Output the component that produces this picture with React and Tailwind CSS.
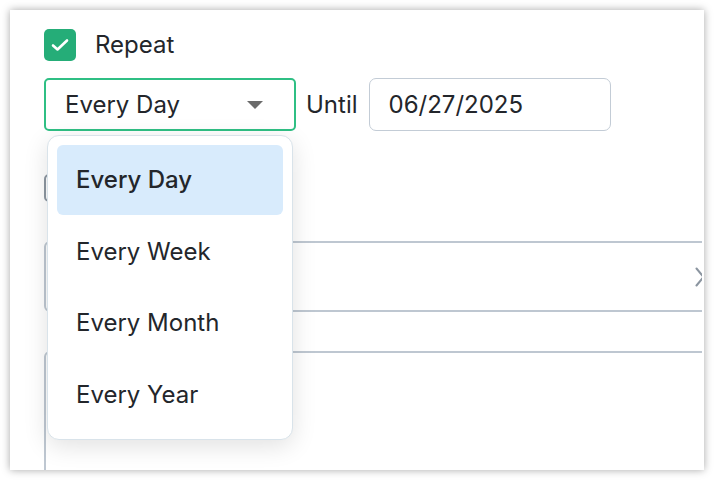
import React from 'react';

const options = ['Every Day', 'Every Week', 'Every Month', 'Every Year'];

const App = () => {
  return (
    <div className="w-[714px] h-[480px] bg-white p-[10px]" style={{ fontFamily: 'Inter, "Noto Sans", sans-serif' }}>
      <div className="relative w-[694px] h-[460px] bg-white shadow-[0_0_8px_rgba(0,0,0,0.35)]">
        {/* form body, clipped on the right */}
        <div className="w-[692px] h-[460px] overflow-hidden pl-[34px] pt-[19px] text-[#23262b]">
          <div className="flex items-center gap-[19px]">
            <div className="w-[32px] h-[32px] rounded-[5px] bg-[#25ad78] flex items-center justify-center">
              <svg width="18" height="14" viewBox="0 0 18 14" fill="none">
                <path d="M2 7.5 L6.5 11.5 L16 2.5" stroke="#fff" strokeWidth="2.6" strokeLinecap="round" strokeLinejoin="round" />
              </svg>
            </div>
            <span className="text-[24px] leading-none">Repeat</span>
          </div>

          <div className="mt-[17px] flex items-center">
            <div className="w-[252px] h-[53px] border-2 border-[#2fbf84] rounded-[5px] pl-[19px] pr-[31px] flex items-center justify-between">
              <span className="text-[24px]">Every Day</span>
              <svg width="16" height="8" viewBox="0 0 16 8">
                <path d="M0 0 L16 0 L8 8 Z" fill="#6b6b6b" />
              </svg>
            </div>
            <span className="ml-[10px] text-[24px]">Until</span>
            <div className="ml-[11px] w-[242px] h-[53px] border-[1.5px] border-[#c3ccd6] rounded-[7px] pl-[19px] flex items-center">
              <span className="text-[24px]">06/27/2025</span>
            </div>
          </div>

          <div className="mt-[43px] w-[28px] h-[28px] border-2 border-[#8d97a1] rounded-[5px]" />

          <div className="mt-[39px] w-[700px] h-[71px] border-2 border-[#bec7d1] rounded-[6px] flex items-center justify-end pr-[37px]">
            <svg width="10" height="20" viewBox="0 0 10 20" fill="none">
              <path d="M1.5 1.5 L8.5 10 L1.5 18.5" stroke="#8b95a0" strokeWidth="2" strokeLinecap="round" />
            </svg>
          </div>

          <div className="mt-[39px] w-[700px] h-[160px] border-2 border-[#bec7d1] rounded-[6px]" />
        </div>

        {/* open dropdown menu */}
        <div className="absolute left-[37px] top-[125px] w-[246px] h-[305px] bg-white border-[1.5px] border-[#d9e3ea] rounded-[12px] shadow-[0_6px_24px_rgba(0,0,0,0.12)] p-[9px] flex flex-col gap-[2px]">
          {options.map((opt, i) => (
            <div
              key={opt}
              className={`h-[70px] rounded-[6px] pl-[19px] flex items-center text-[24px] text-[#23262b] ${i === 0 ? 'bg-[#d8ebfc] font-medium' : ''}`}
            >
              {opt}
            </div>
          ))}
        </div>
      </div>
    </div>
  );
};

export default App;
